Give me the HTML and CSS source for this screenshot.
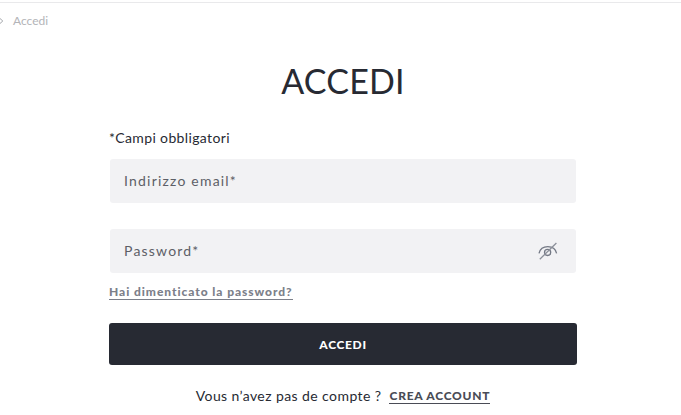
FILE: index.html
```html
<!DOCTYPE html>
<html lang="it">
<head>
    <meta charset="UTF-8">
    <meta name="viewport" content="width=device-width, initial-scale=1.0">
    <title>Accedi</title>
    <link rel="stylesheet" href="styles.css">
</head>
<body>
    <nav class="breadcrumb">
        <svg class="chevron" width="4" height="8" viewBox="0 0 4 8"><path d="M0 1.5L2.8 4L0 6.5"/></svg>
        <span class="crumb">Accedi</span>
    </nav>
    <main class="login">
        <h1 class="title">ACCEDI</h1>
        <form class="login-form">
            <p class="required"><span>*Campi obbligatori</span></p>
            <div class="field">
                <input class="email" type="email" placeholder="Indirizzo email*">
            </div>
            <div class="field">
                <input class="password" type="password" placeholder="Password*">
                <svg class="eye" width="20" height="18" viewBox="0 0 20 18">
                    <path d="M1 11.3C2 7.2 5.6 4.7 9.8 4.7C14 4.7 17.6 7.2 18.6 11.3"/>
                    <circle cx="9.6" cy="10.4" r="3.1"/>
                    <path class="slash" d="M1.8 17.2L18.4 1"/>
                </svg>
            </div>
            <a class="forgot">Hai dimenticato la password?</a>
            <button class="submit" type="button">ACCEDI</button>
        </form>
        <p class="signup">
            <span class="question">Vous n’avez pas de compte ?</span>
            <a class="create">CREA ACCOUNT</a>
        </p>
    </main>
</body>
</html>
```
FILE: styles.css
```css
* {
    box-sizing: border-box;
}
body {
    margin: 0;
    padding-top: 2px;
    height: 415px;
    overflow: hidden;
    background-color: #fff;
    color: #272a33;
    font-family: Lato, sans-serif;
    font-size: 14px;
}
.breadcrumb {
    display: flex;
    align-items: center;
    gap: 9px;
    height: 37px;
    padding-bottom: 1px;
    border-top: 1px solid #e9e9eb;
    color: #b3b4b8;
    font-size: 12px;
}
.chevron {
    fill: none;
    stroke: #a5a7ac;
}
.login {
    width: 468px;
    margin-left: 109px;
}
.title {
    margin: 21px 0 0;
    height: 42px;
    line-height: 42px;
    text-align: center;
    font-size: 34px;
    font-weight: 400;
    letter-spacing: 0.2px;
}
.login-form {
    display: flex;
    flex-direction: column;
    align-items: flex-start;
}
.required {
    margin: 26px 0 11px;
    line-height: 20px;
    font-size: 14px;
    letter-spacing: 0.36px;
}
.field {
    display: flex;
    align-items: center;
    width: 466px;
    height: 44px;
    margin: 0 1px 26px;
    padding: 0 18px 0 14px;
    border-radius: 3px;
    background-color: #f2f2f4;
}
.field input {
    flex: 1;
    padding: 0 0 2px;
    border: none;
    outline: none;
    background: none;
    font-family: inherit;
    font-size: 14px;
    letter-spacing: 1.2px;
}
.field input::placeholder {
    color: #5d5f67;
}
.eye {
    fill: none;
    stroke: #747985;
    stroke-width: 1.3;
}
.slash {
    stroke: #8b8f99;
}
.forgot {
    margin-top: -14px;
    line-height: 14px;
    border-bottom: 1px solid #7c808a;
    color: #7c808a;
    font-size: 12px;
    font-weight: 900;
    letter-spacing: 0.94px;
}
.submit {
    width: 468px;
    height: 42px;
    margin-top: 23px;
    border: none;
    border-radius: 3px;
    background-color: #272a33;
    color: #fff;
    font-family: inherit;
    font-size: 12px;
    font-weight: 900;
    letter-spacing: 0.65px;
}
.signup {
    display: flex;
    justify-content: center;
    align-items: center;
    gap: 8px;
    margin: 21px 0 0;
    line-height: 20px;
}
.question {
    letter-spacing: 0.42px;
}
.create {
    line-height: 15px;
    border-bottom: 1px solid #4a4c56;
    color: #4a4c56;
    font-size: 12px;
    font-weight: 900;
    letter-spacing: 0.75px;
}
```
